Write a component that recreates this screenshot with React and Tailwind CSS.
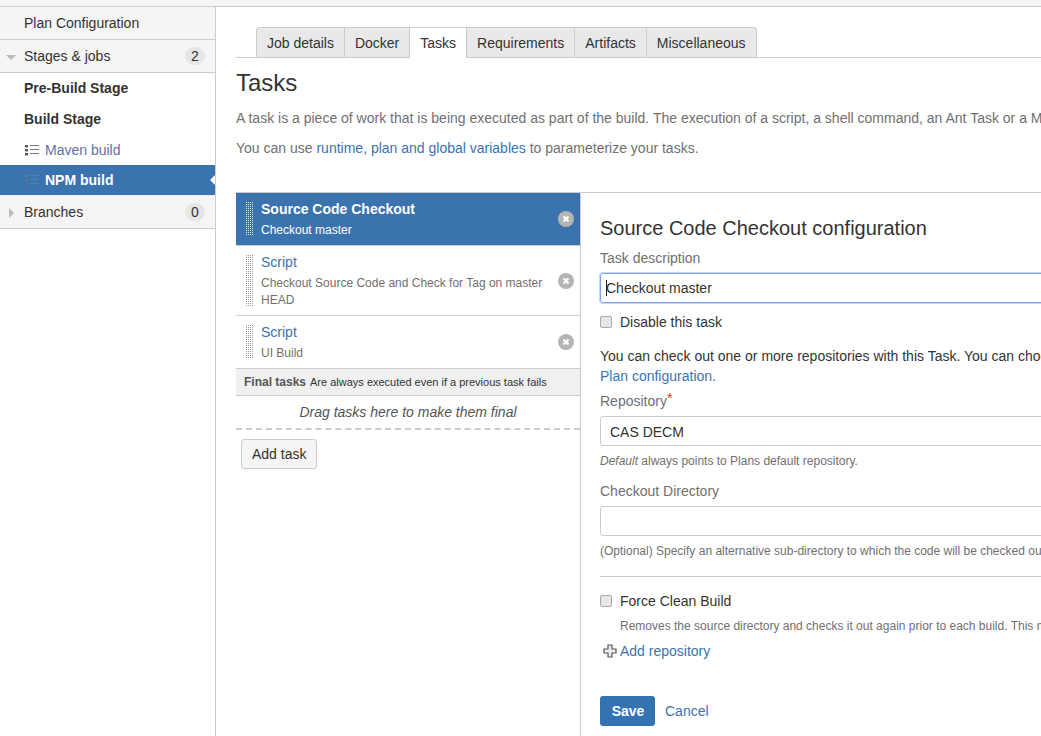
import { useState } from "react";

const tabs = ["Job details", "Docker", "Tasks", "Requirements", "Artifacts", "Miscellaneous"];

const Grip = ({ light }) => (
  <div
    className={`w-2 shrink-0 bg-[length:2px_2px] ${
      light
        ? "bg-[conic-gradient(#dbe6f1_25%,transparent_0)]"
        : "bg-[conic-gradient(#999_25%,transparent_0)]"
    }`}
  />
);

const RemoveIcon = () => (
  <svg width="16" height="16" viewBox="0 0 16 16" className="shrink-0">
    <circle cx="8" cy="8" r="8" fill="#b5b5b5" />
    <path d="M5.500 5.500l5 5M10.500 5.500l-5 5" stroke="#fff" strokeWidth="2.2" />
  </svg>
);

const ListIcon = ({ dim }) => (
  <svg width="14" height="12" viewBox="0 0 14 12" className="shrink-0">
    <g fill={dim ? "#5a7590" : "#555"}>
      <rect x="0" y="1" width="3" height="2.4" />
      <rect x="0" y="5" width="3" height="2.4" />
      <rect x="0" y="9" width="3" height="2.4" />
    </g>
    <g fill={dim ? "#5a7fa8" : "#777"}>
      <rect x="5" y="1" width="9" height="1" />
      <rect x="5" y="5" width="9" height="1" />
      <rect x="5" y="9" width="9" height="1" />
    </g>
  </svg>
);

const SideHeader = ({ label, count, arrow }) => (
  <div className="relative flex h-[33px] items-center justify-between border-b border-[#ccc] bg-[#f5f5f5] pl-6 pr-[10px] text-[#333]">
    {arrow === "down" && (
      <span className="absolute left-[6px] top-[15px] border-x-[5px] border-t-[5px] border-x-transparent border-t-[#bbb]" />
    )}
    {arrow === "right" && (
      <span className="absolute left-[9px] top-[12px] border-y-[5px] border-l-[5px] border-y-transparent border-l-[#bbb]" />
    )}
    <span>{label}</span>
    {count && (
      <span className="flex h-[18px] w-5 items-center justify-center rounded-full bg-[#e6e6e6] text-sm">{count}</span>
    )}
  </div>
);

const TaskItem = ({ title, desc, active, height }) => (
  <div
    className={`flex border-b border-[#ccc] pl-[9px] pr-[6px] ${height} ${
      active ? "bg-[#3b73af] text-white" : "bg-white"
    }`}
  >
    <div className="my-[9px] flex">
      <Grip light={active} />
    </div>
    <div className="min-w-0 flex-1 pl-2 pt-[6px]">
      <div className={active ? "font-bold leading-[20px]" : "leading-[20px] text-[#3b73af]"}>{title}</div>
      <div className={`mt-[3px] text-xs leading-[17px] ${active ? "text-white" : "text-[#707070]"}`}>{desc}</div>
    </div>
    <div className="flex items-center pl-2">
      <RemoveIcon />
    </div>
  </div>
);

const CheckRow = ({ label }) => (
  <label className="flex h-5 items-center text-[#333]">
    <input type="checkbox" className="m-0 h-[12px] w-[12px] appearance-none rounded-[2px] border border-[#aaa] bg-[#e6e6e6]" />
    <span className="ml-2">{label}</span>
  </label>
);

export default function App() {
  const [desc, setDesc] = useState("Checkout master");

  return (
    <div className="flex h-[736px] flex-col overflow-hidden bg-white font-['Liberation_Sans',Arial,sans-serif] text-sm text-[#333]">
      <div className="h-[7px] shrink-0 border-b border-[#ccc] bg-[#f5f5f5]" />
      <div className="flex min-h-0 flex-1">
        {/* sidebar */}
        <div className="w-[216px] shrink-0 border-r border-[#ccc]">
          <SideHeader label="Plan Configuration" />
          <SideHeader label="Stages & jobs" count="2" arrow="down" />
          <div className="flex h-[31px] items-center pb-[2px] pl-6 font-bold">Pre-Build Stage</div>
          <div className="flex h-[31px] items-center pb-[2px] pl-6 font-bold">Build Stage</div>
          <div className="flex h-[30px] items-center gap-[6px] pl-[25px] text-[#5f6fa8]">
            <ListIcon />
            Maven build
          </div>
          <div className="relative flex h-[31px] items-center gap-[6px] border-b border-[#f0f0f0] bg-[#3b73af] pl-[25px] font-bold text-white">
            <ListIcon dim />
            NPM build
            <span className="absolute right-0 top-[10px] border-y-[5px] border-r-[5px] border-y-transparent border-r-white" />
          </div>
          <SideHeader label="Branches" count="0" arrow="right" />
        </div>

        {/* main */}
        <div className="min-w-0 flex-1 overflow-hidden pl-5">
          <div className="mt-5 flex h-[31px] border-b border-[#ccc] pl-5">
            {tabs.map((tab) => (
              <div
                key={tab}
                className={`flex h-[31px] items-center border-t border-r border-[#ccc] px-[10px] first:rounded-tl-[3px] first:border-l last:rounded-tr-[3px] ${
                  tab === "Tasks" ? "bg-white" : "border-b bg-[#e9e9e9]"
                }`}
              >
                {tab}
              </div>
            ))}
          </div>
          <h1 className="mt-[10px] text-2xl leading-[30px] font-normal text-[#333]">Tasks</h1>
          <p className="mt-[10px] leading-5 whitespace-nowrap text-[#707070]">
            A task is a piece of work that is being executed as part of the build. The execution of a script, a shell command, an Ant Task or a Maven Goal are examples.
          </p>
          <p className="mt-[10px] leading-5 whitespace-nowrap text-[#707070]">
            You can use <span className="text-[#3b73af]">runtime, plan and global variables</span> to parameterize your tasks.
          </p>

          <div className="mt-[34px] flex border-t border-[#ccc]">
            {/* task list */}
            <div className="w-[345px] shrink-0 border-r border-[#ccc] pb-[300px]">
              <TaskItem active title="Source Code Checkout" desc="Checkout master" height="h-[53px]" />
              <TaskItem title="Script" desc="Checkout Source Code and Check for Tag on master HEAD" height="h-[70px]" />
              <TaskItem title="Script" desc="UI Build" height="h-[53px]" />
              <div className="flex h-[27px] items-center border-b border-[#ccc] bg-[#f0f0f0] pl-2 text-xs whitespace-nowrap">
                <b className="text-[#555]">Final tasks</b>
                <span className="ml-1 text-[11px]">Are always executed even if a previous task fails</span>
              </div>
              <div className="flex h-[34px] items-center justify-center border-b-2 border-dashed border-[#ccc] italic text-[#555]">
                Drag tasks here to make them final
              </div>
              <button className="mt-[9px] ml-[5px] h-[30px] rounded-[3px] border border-[#ccc] bg-[#f5f5f5] px-[10px] text-[#333]">
                Add task
              </button>
            </div>

            {/* config form */}
            <div className="min-w-0 flex-1 pl-[19px]">
              <h2 className="mt-[22px] text-xl leading-[26px] font-normal text-[#333]">Source Code Checkout configuration</h2>
              <div className="mt-[7px] leading-5 text-[#707070]">Task description</div>
              <div className="relative mt-[5px] w-[600px]">
                <input
                  value={desc}
                  onChange={(e) => setDesc(e.target.value)}
                  className="block h-[30px] w-full rounded-[3px] border border-[#7fa6ee] px-[5px] text-[#333] ring-1 ring-[#c3d6f7] outline-none"
                />
                {/* caret of the focused field */}
                <span className="absolute left-[6px] top-[7px] h-4 w-px bg-[#222]" />
              </div>
              <div className="mt-[9px]">
                <CheckRow label="Disable this task" />
              </div>
              <p className="mt-[14px] leading-5 whitespace-nowrap text-[#333]">
                You can check out one or more repositories with this Task. You can choose from the repositories defined in your
              </p>
              <p className="leading-5 text-[#3b73af]">Plan configuration.</p>
              <div className="mt-[5px] leading-5 text-[#707070]">
                Repository<span className="relative -top-[3px] text-[#e0301e]">*</span>
              </div>
              <div className="mt-[5px] flex h-[30px] w-[600px] items-center rounded-[3px] border border-[#ccc] px-[9px] pt-[2px] text-[#333]">
                CAS DECM
              </div>
              <div className="mt-[7px] text-xs leading-4 text-[#707070]">
                <i>Default</i> always points to Plans default repository.
              </div>
              <div className="mt-[12px] leading-5 text-[#707070]">Checkout Directory</div>
              <input className="mt-[5px] block h-[30px] w-[600px] rounded-[3px] border border-[#ccc]" />
              <div className="mt-[7px] text-xs leading-4 whitespace-nowrap text-[#707070]">
                (Optional) Specify an alternative sub-directory to which the code will be checked out.
              </div>
              <div className="mt-[17px] h-px w-[600px] bg-[#ccc]" />
              <div className="mt-[14px]">
                <CheckRow label="Force Clean Build" />
              </div>
              <div className="mt-[7px] pl-5 text-xs leading-4 whitespace-nowrap text-[#707070]">
                Removes the source directory and checks it out again prior to each build. This may slow down the build.
              </div>
              <div className="mt-[7px] flex h-5 items-center gap-[3px] pl-[3px] text-[#3b73af]">
                <svg width="14" height="14" viewBox="0 0 14 14" className="shrink-0">
                  <path d="M5 1h4v4h4v4H9v4H5V9H1V5h4z" fill="#eee" stroke="#555" strokeWidth="1.2" />
                </svg>
                Add repository
              </div>
              <div className="mt-[35px] flex items-center gap-[10px]">
                <button className="h-[30px] w-[55px] rounded-[3px] bg-[#3572b0] pl-px font-bold text-white">Save</button>
                <span className="text-[#3b73af]">Cancel</span>
              </div>
            </div>
          </div>
        </div>
      </div>
    </div>
  );
}
